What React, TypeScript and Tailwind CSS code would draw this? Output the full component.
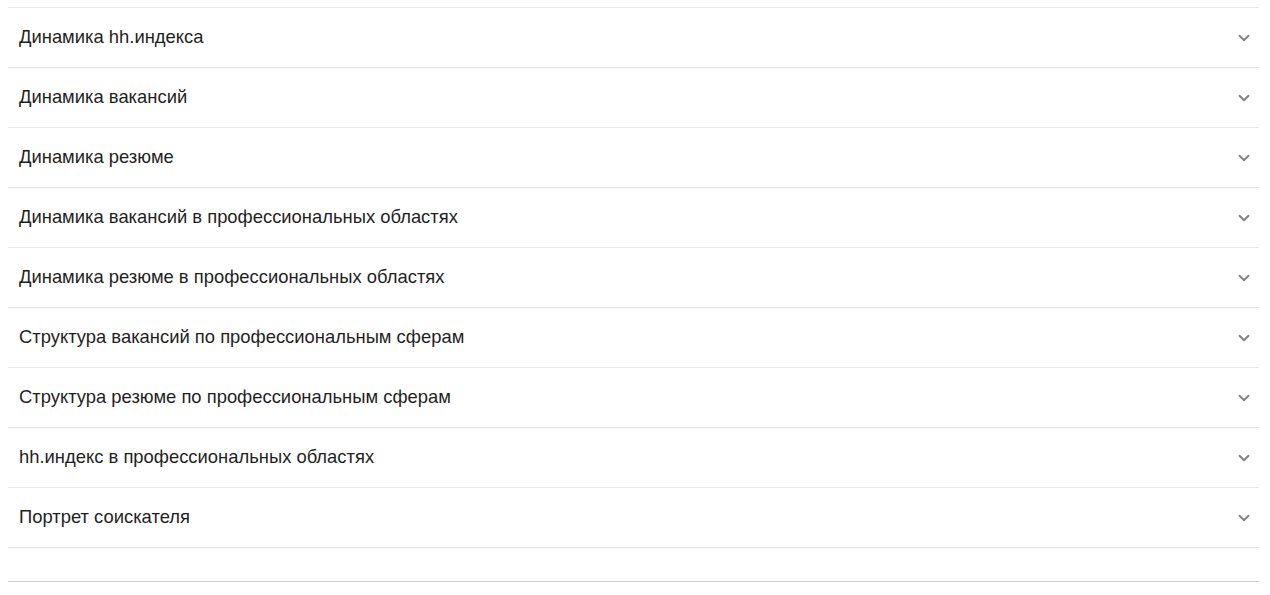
import { ChevronDown } from "lucide-react";

const items = [
  "Динамика hh.индекса",
  "Динамика вакансий",
  "Динамика резюме",
  "Динамика вакансий в профессиональных областях",
  "Динамика резюме в профессиональных областях",
  "Структура вакансий по профессиональным сферам",
  "Структура резюме по профессиональным сферам",
  "hh.индекс в профессиональных областях",
  "Портрет соискателя",
];

export default function App() {
  return (
    <div className="min-h-screen bg-white pl-2 pr-[11px] pt-[7px] font-['Liberation_Sans',Arial,sans-serif] text-[#1f1f1f]">
      <div className="border-t border-[#e6e6e6]">
        {items.map((title) => (
          <div
            key={title}
            className="flex h-[60px] items-center justify-between border-b border-[#e6e6e6] pl-[11px] pr-[6px] cursor-pointer"
          >
            <span className="-mt-[1px] text-[18.4px] leading-none">{title}</span>
            <ChevronDown size={18} strokeWidth={2.4} className="text-[#808080]" />
          </div>
        ))}
      </div>
      <div className="mt-[33px] border-t border-[#cfcfcf]"></div>
    </div>
  );
}
